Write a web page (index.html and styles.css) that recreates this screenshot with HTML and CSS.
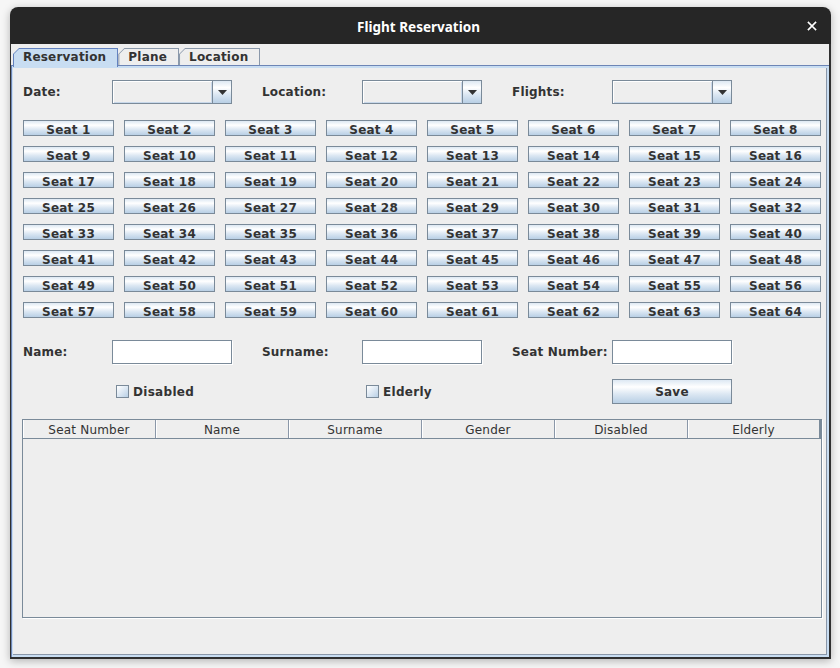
FILE: index.html
```html
<!DOCTYPE html>
<html>
<head>
<meta charset="utf-8">
<title>Flight Reservation</title>
<link rel="stylesheet" href="styles.css">
</head>
<body>
<div class="window">
  <div class="titlebar">
    <span></span>
    <span class="title">Flight Reservation</span>
    <span class="close"><svg width="10" height="10" viewBox="0 0 10 10"><path d="M1.5 1.5 L8.5 8.5 M8.5 1.5 L1.5 8.5" stroke="#ffffff" stroke-width="1.7" stroke-linecap="square"/></svg></span>
  </div>
  <div class="body">
    <div class="tabs">
      <div class="tab selected"><div class="tab-in">Reservation</div></div>
      <div class="tab"><div class="tab-in">Plane</div></div>
      <div class="tab"><div class="tab-in">Location</div></div>
    </div>
    <div class="panel">
      <div class="panel-inner">
        <div class="form-row">
          <span class="label">Date:</span>
          <div class="combo"><div class="combo-field"></div><div class="combo-btn"><svg width="9" height="5" viewBox="0 0 9 5"><path d="M0 0 H9 L4.5 5 Z" fill="#333"/></svg></div></div>
          <span></span>
          <span class="label">Location:</span>
          <div class="combo"><div class="combo-field"></div><div class="combo-btn"><svg width="9" height="5" viewBox="0 0 9 5"><path d="M0 0 H9 L4.5 5 Z" fill="#333"/></svg></div></div>
          <span></span>
          <span class="label">Flights:</span>
          <div class="combo"><div class="combo-field"></div><div class="combo-btn"><svg width="9" height="5" viewBox="0 0 9 5"><path d="M0 0 H9 L4.5 5 Z" fill="#333"/></svg></div></div>
        </div>

        <div class="seats">
          <button class="btn seat">Seat 1</button><button class="btn seat">Seat 2</button><button class="btn seat">Seat 3</button><button class="btn seat">Seat 4</button><button class="btn seat">Seat 5</button><button class="btn seat">Seat 6</button><button class="btn seat">Seat 7</button><button class="btn seat">Seat 8</button>
          <button class="btn seat">Seat 9</button><button class="btn seat">Seat 10</button><button class="btn seat">Seat 11</button><button class="btn seat">Seat 12</button><button class="btn seat">Seat 13</button><button class="btn seat">Seat 14</button><button class="btn seat">Seat 15</button><button class="btn seat">Seat 16</button>
          <button class="btn seat">Seat 17</button><button class="btn seat">Seat 18</button><button class="btn seat">Seat 19</button><button class="btn seat">Seat 20</button><button class="btn seat">Seat 21</button><button class="btn seat">Seat 22</button><button class="btn seat">Seat 23</button><button class="btn seat">Seat 24</button>
          <button class="btn seat">Seat 25</button><button class="btn seat">Seat 26</button><button class="btn seat">Seat 27</button><button class="btn seat">Seat 28</button><button class="btn seat">Seat 29</button><button class="btn seat">Seat 30</button><button class="btn seat">Seat 31</button><button class="btn seat">Seat 32</button>
          <button class="btn seat">Seat 33</button><button class="btn seat">Seat 34</button><button class="btn seat">Seat 35</button><button class="btn seat">Seat 36</button><button class="btn seat">Seat 37</button><button class="btn seat">Seat 38</button><button class="btn seat">Seat 39</button><button class="btn seat">Seat 40</button>
          <button class="btn seat">Seat 41</button><button class="btn seat">Seat 42</button><button class="btn seat">Seat 43</button><button class="btn seat">Seat 44</button><button class="btn seat">Seat 45</button><button class="btn seat">Seat 46</button><button class="btn seat">Seat 47</button><button class="btn seat">Seat 48</button>
          <button class="btn seat">Seat 49</button><button class="btn seat">Seat 50</button><button class="btn seat">Seat 51</button><button class="btn seat">Seat 52</button><button class="btn seat">Seat 53</button><button class="btn seat">Seat 54</button><button class="btn seat">Seat 55</button><button class="btn seat">Seat 56</button>
          <button class="btn seat">Seat 57</button><button class="btn seat">Seat 58</button><button class="btn seat">Seat 59</button><button class="btn seat">Seat 60</button><button class="btn seat">Seat 61</button><button class="btn seat">Seat 62</button><button class="btn seat">Seat 63</button><button class="btn seat">Seat 64</button>
        </div>

        <div class="form-row name-row">
          <span class="label">Name:</span>
          <div class="field"></div>
          <span></span>
          <span class="label">Surname:</span>
          <div class="field"></div>
          <span></span>
          <span class="label">Seat Number:</span>
          <div class="field"></div>
        </div>

        <div class="form-row check-row">
          <span></span>
          <label class="check"><span class="box"></span>Disabled</label>
          <span></span>
          <span></span>
          <label class="check"><span class="box"></span>Elderly</label>
          <span></span>
          <span></span>
          <button class="btn save">Save</button>
        </div>

        <div class="table">
          <div class="thead">
            <div class="th">Seat Number</div>
            <div class="th">Name</div>
            <div class="th">Surname</div>
            <div class="th">Gender</div>
            <div class="th">Disabled</div>
            <div class="th">Elderly</div>
          </div>
          <div class="tbody"></div>
        </div>
      </div>
    </div>
  </div>
</div>
</body>
</html>
```

FILE: styles.css
```css
html, body {
  margin: 0;
  padding: 0;
}
body {
  background: #f6f6f6;
  width: 840px;
  height: 668px;
  overflow: hidden;
  font-family: "DejaVu Sans", sans-serif;
}
.window {
  margin: 7px 0 0 10px;
  width: 821px;
  height: 652px;
  box-sizing: border-box;
  border-radius: 8px 8px 0 0;
  box-shadow: 0 2px 9px rgba(0, 0, 0, 0.28);
  display: flex;
  flex-direction: column;
  overflow: hidden;
}
.titlebar {
  height: 37px;
  background: #262626;
  display: grid;
  grid-template-columns: 1fr auto 1fr;
  align-items: center;
  flex: none;
}
.title {
  font-family: "Noto Sans", sans-serif;
  font-weight: bold;
  font-size: 13.5px;
  color: #ffffff;
  padding: 2px 4px 0 0;
}
.close {
  justify-self: end;
  padding: 1px 14px 0 0;
  display: flex;
}
.body {
  flex: 1;
  background: #eeeeee;
  border-left: 1px solid #303030;
  border-right: 2px solid #303030;
  border-bottom: 2px solid #303030;
  display: flex;
  flex-direction: column;
  min-height: 0;
}
.tabs {
  display: flex;
  padding: 4px 0 0 2px;
  height: 17px;
  position: relative;
  z-index: 2;
}
.tab {
  background: #8a98aa;
  clip-path: polygon(6px 0, 100% 0, 100% 100%, 0 100%, 0 6px);
  padding: 1px 1px 0 1px;
  height: 17px;
  box-sizing: border-box;
}
.tab.selected {
  background: #6382bf;
  height: 19px;
}
.tab-in {
  height: 100%;
  background: #eeeeee;
  clip-path: polygon(5px 0, 100% 0, 100% 100%, 0 100%, 0 5px);
  font-weight: bold;
  font-size: 12px;
  color: #333333;
  line-height: 16px;
  padding: 0 11px 0 9px;
  letter-spacing: 0.2px;
}
.tab.selected .tab-in {
  background: #c8ddf2;
}
.panel {
  flex: 1;
  border-top: 1px solid #6d85b5;
  border-left: 1px solid #6d85b5;
  background: #c8ddf2;
  padding: 2px 2px 2px 1px;
  display: flex;
  min-height: 0;
}
.panel-inner {
  flex: 1;
  background: #eeeeee;
  border-right: 1px solid #8a97a8;
  border-bottom: 1px solid #8a97a8;
  padding: 12px 0 0 10px;
  display: flex;
  flex-direction: column;
}
.form-row {
  display: grid;
  grid-template-columns: 89px 120px 30px 100px 120px 30px 100px 120px;
  height: 24px;
  align-items: center;
}
.label {
  font-weight: bold;
  font-size: 12px;
  color: #333333;
  letter-spacing: 0.2px;
  white-space: nowrap;
}
.combo {
  height: 24px;
  box-sizing: border-box;
  border: 1px solid #7a8a99;
  display: flex;
}
.combo-field {
  flex: 1;
  background: #eeeeee;
  box-shadow: inset 1px 1px 0 #ffffff, inset -1px -1px 0 #c8d8ea;
  border-right: 1px solid #7a8a99;
}
.combo-btn {
  width: 18px;
  background: linear-gradient(#dde8f3 0%, #ffffff 30%, #dde8f3 60%, #b8cfe5 100%);
  display: flex;
  align-items: center;
  justify-content: center;
}
.btn {
  box-sizing: border-box;
  border: 1px solid #7a8a99;
  background: linear-gradient(#dde8f3 0%, #ffffff 30%, #dde8f3 60%, #b8cfe5 100%);
  font-family: "DejaVu Sans", sans-serif;
  font-weight: bold;
  font-size: 12px;
  color: #333333;
  letter-spacing: 0.2px;
  padding: 0;
  margin: 0;
  border-radius: 0;
}
.seats {
  margin-top: 16px;
  display: grid;
  grid-template-columns: repeat(8, 91px);
  grid-auto-rows: 16px;
  column-gap: 10px;
  row-gap: 10px;
}
.seat {
  height: 16px;
  line-height: 12px;
  padding: 3px 0 0 0;
}
.name-row {
  margin-top: 22px;
}
.field {
  height: 24px;
  box-sizing: border-box;
  background: #ffffff;
  border: 1px solid #7a8a99;
  box-shadow: 1px 1px 0 #ffffff;
}
.check-row {
  margin-top: 15px;
  height: 25px;
}
.check {
  display: flex;
  align-items: center;
  gap: 4px;
  padding-left: 4px;
  font-weight: bold;
  font-size: 12px;
  color: #333333;
  letter-spacing: 0.3px;
}
.box {
  width: 13px;
  height: 13px;
  box-sizing: border-box;
  border: 1px solid #7a8a99;
  background: linear-gradient(135deg, #ffffff 0%, #dde8f3 50%, #b8cfe5 100%);
}
.save {
  height: 25px;
}
.table {
  margin-top: 15px;
  margin-left: -1px;
  width: 800px;
  height: 199px;
  box-sizing: border-box;
  border: 1px solid #7a8a99;
  box-shadow: 1px 1px 0 #ffffff;
  display: flex;
  flex-direction: column;
}
.thead {
  display: grid;
  grid-template-columns: repeat(6, 133px);
  height: 19px;
  box-sizing: border-box;
  border-bottom: 1px solid #7a8a99;
}
.th {
  font-size: 12px;
  color: #333333;
  text-align: center;
  line-height: 15px;
  padding-top: 3px;
  border-right: 1px solid #8a97a8;
  box-shadow: inset 1px 0 0 #ffffff;
  letter-spacing: 0.2px;
}
.th:last-child {
  border-right: 2px solid #7a8a99;
}
.tbody {
  flex: 1;
  background: #eeeeee;
}
```
